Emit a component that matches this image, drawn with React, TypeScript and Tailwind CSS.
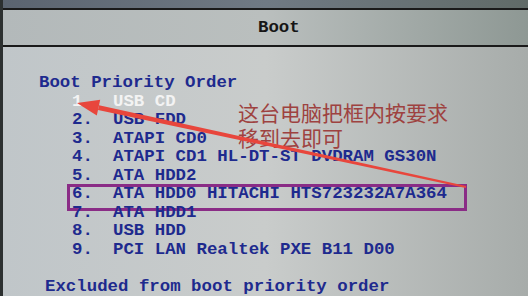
const rows: { n: string; label: string }[] = [
  { n: "1.", label: "USB CD" },
  { n: "2.", label: "USB FDD" },
  { n: "3.", label: "ATAPI CD0" },
  { n: "4.", label: "ATAPI CD1 HL-DT-ST DVDRAM GS30N" },
  { n: "5.", label: "ATA HDD2" },
  { n: "6.", label: "ATA HDD0 HITACHI HTS723232A7A364" },
  { n: "7.", label: "ATA HDD1" },
  { n: "8.", label: "USB HDD" },
  { n: "9.", label: "PCI LAN Realtek PXE B11 D00" },
];

export default function App() {
  return (
    <div className="relative flex h-[296px] w-[528px] overflow-hidden bg-[#c4c8c7] font-['Liberation_Mono',monospace] text-[17.4px] font-bold leading-[18.5px]">
      <div className="w-[3px] bg-[#2c3030]" />
      <div className="flex flex-1 flex-col">
        <div className="h-[9px] bg-gradient-to-r from-[#5b6470] via-[#707a84] to-[#616b68]" />
        <div className="h-[2px] bg-[#1a1a1a]" />
        <div className="flex h-[37px] items-center bg-gradient-to-r from-[#b3b9ba] via-[#babfbe] to-[#8e9894] pl-[255px] pt-[2px] text-[#161616]">
          Boot
        </div>
        <div className="h-[2px] bg-[#1a1a1a]" />
        <div className="flex-1 bg-gradient-to-r from-[#c0c6c9] via-[#c9cccb] to-[#a7acaa] pl-[36px] pt-[27.5px] text-[#1e2a8e]">
          <div>Boot Priority Order</div>
          {rows.map((r, i) => (
            <div key={r.n} className={`relative ml-[33px] flex ${i === 0 ? "text-[#f3f3f3]" : ""}`}>
              <span className="w-[41px]">{r.n}</span>
              <span className="whitespace-pre">{r.label}</span>
              {i === 5 && (
                <div className="absolute left-[-5px] top-[-1px] h-[27px] w-[400px] border-[3px] border-[#8a2c86]" />
              )}
            </div>
          ))}
          <div className="h-[18.5px]" />
          <div className="ml-[6px]">Excluded from boot priority order</div>
        </div>
      </div>

      <div className="absolute left-[238px] top-[102px] flex flex-col gap-[4px] font-['Noto_Sans_CJK_SC',sans-serif] text-[21px] font-normal leading-none text-[#9e4240]">
        <div>这台电脑把框内按要求</div>
        <div>移到去即可</div>
      </div>

      <svg className="pointer-events-none absolute left-0 top-0" width="528" height="296">
        <polygon
          points="99,105.2 466.2,186 465.8,188 98,110"
          fill="#e8463c"
        />
        <polygon points="77,103 100.2,99.8 96.8,115.4" fill="#e8463c" />
      </svg>
    </div>
  );
}
